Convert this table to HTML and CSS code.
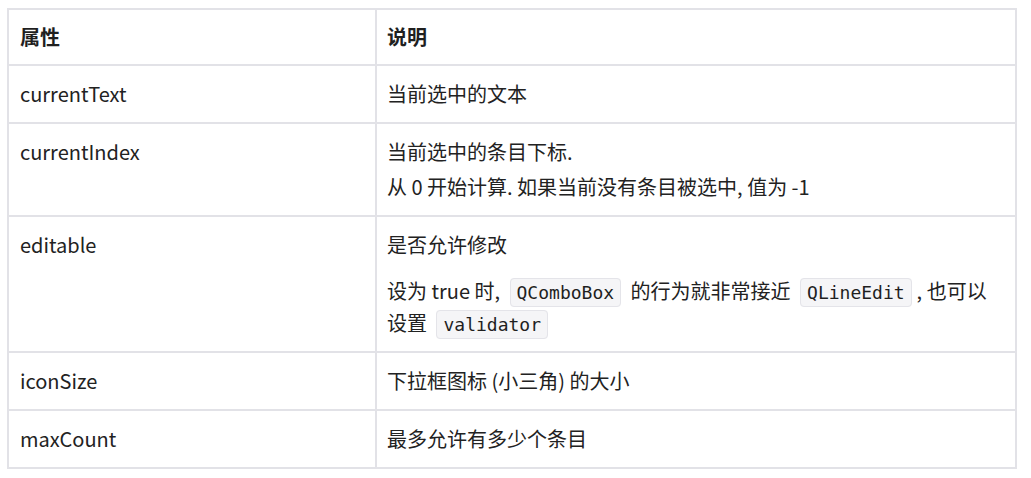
FILE: index.html
```html
<!DOCTYPE html>
<html lang="zh-CN">
<head>
<meta charset="utf-8">
<link rel="stylesheet" href="styles.css">
</head>
<body>
<table class="props">
  <thead>
    <tr><th class="col-name">属性</th><th>说明</th></tr>
  </thead>
  <tbody>
    <tr><td>currentText</td><td><p>当前选中的文本</p></td></tr>
    <tr><td>currentIndex</td><td><p>当前选中的条目下标.</p><p class="tight">从 0 开始计算. 如果当前没有条目被选中, 值为 -1</p></td></tr>
    <tr><td>editable</td><td><p>是否允许修改</p><p class="para">设为 true 时, <code>QComboBox</code> 的行为就非常接近 <code>QLineEdit</code>, 也可以<span class="keep">设置 <code>validator</code></span></p></td></tr>
    <tr><td>iconSize</td><td><p>下拉框图标 (小三角) 的大小</p></td></tr>
    <tr><td>maxCount</td><td><p>最多允许有多少个条目</p></td></tr>
  </tbody>
</table>
</body>
</html>
```

FILE: styles.css
```css
html, body {
  background: #ffffff;
}
body {
  margin: 8px 0 0 7px;
  font-family: "Noto Sans CJK SC", "Noto Sans", sans-serif;
  font-size: 20px;
  color: #222222;
}
.props {
  width: 1010px;
  border-collapse: collapse;
  table-layout: fixed;
}
.props th, .props td {
  border: 2px solid #e2e2e7;
  padding: 12px 12px 12px 11px;
  text-align: left;
  vertical-align: top;
  line-height: 32px;
}
.props th {
  padding-top: 11px;
  padding-bottom: 11px;
  font-weight: 700;
  color: #1f1f1f;
}
.props td + td, .props th + th {
  padding-left: 10px;
}
.col-name {
  width: 343px;
}
.props p {
  margin: 0;
}
.props p.tight {
  margin-top: 3px;
}
.props p.para {
  margin-top: 14px;
}
.keep {
  white-space: nowrap;
}
.props code {
  font-family: "DejaVu Sans Mono", monospace;
  font-size: 18px;
  line-height: 1;
  background: #f5f5f7;
  border: 1px solid #e4e4e9;
  border-radius: 4px;
  padding: 3px 6px;
  margin: 0 5px;
  color: #1f1f1f;
}
```
